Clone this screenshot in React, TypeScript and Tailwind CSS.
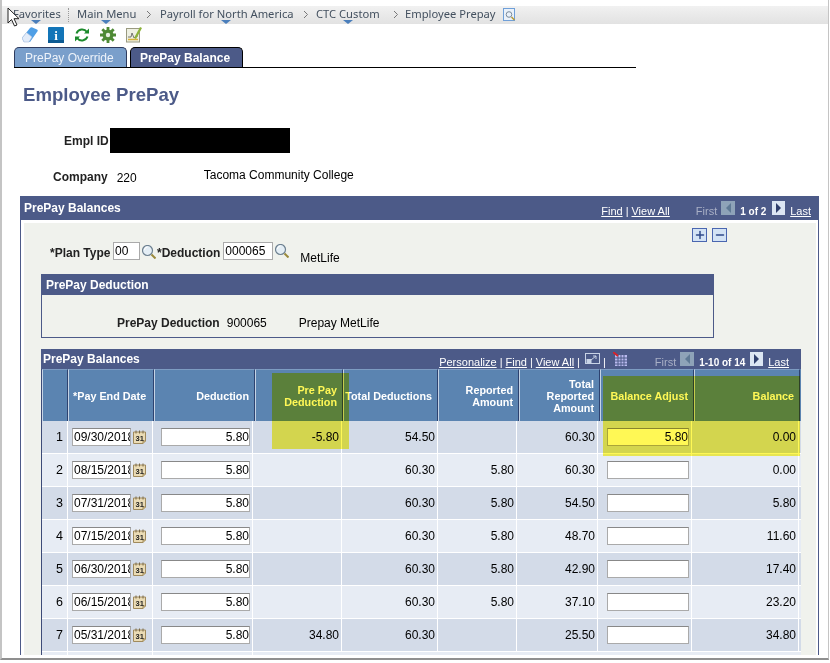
import { Plus, Minus } from "lucide-react";

const rows = [
  { n: 1, date: "09/30/2018", pre: "-5.80", total: "54.50", rep: "", totRep: "60.30", adj: "5.80", bal: "0.00" },
  { n: 2, date: "08/15/2018", pre: "", total: "60.30", rep: "5.80", totRep: "60.30", adj: "", bal: "0.00" },
  { n: 3, date: "07/31/2018", pre: "", total: "60.30", rep: "5.80", totRep: "54.50", adj: "", bal: "5.80" },
  { n: 4, date: "07/15/2018", pre: "", total: "60.30", rep: "5.80", totRep: "48.70", adj: "", bal: "11.60" },
  { n: 5, date: "06/30/2018", pre: "", total: "60.30", rep: "5.80", totRep: "42.90", adj: "", bal: "17.40" },
  { n: 6, date: "06/15/2018", pre: "", total: "60.30", rep: "5.80", totRep: "37.10", adj: "", bal: "23.20" },
  { n: 7, date: "05/31/2018", pre: "34.80", total: "60.30", rep: "", totRep: "25.50", adj: "", bal: "34.80" },
];

const headCell = "flex items-center justify-end text-right whitespace-nowrap pr-[5px] border-l border-t border-l-[#c5d3e5] border-t-[#7d9cc2] border-r border-r-[#2d4270] leading-[12px]";
const rowCell = "flex items-center justify-end pr-[2px] border-r border-white";

const Triangle = ({ left }: { left: number }) => (
  <span className="absolute top-[14px] w-0 h-0 border-x-[5px] border-x-transparent border-t-[4px] border-t-[#4a7ebb]" style={{ left }} />
);

const Chevron = () => (
  <svg width="6" height="9" viewBox="0 0 6 9" className="shrink-0">
    <path d="M1 1l3.500 3.500L1 8" fill="none" stroke="#777" strokeWidth="1" />
  </svg>
);

const Lens = ({ className }: { className?: string }) => (
  <svg width="14" height="14" viewBox="0 0 14 14" className={className}>
    <circle cx="5.500" cy="5.500" r="5" fill="#e4eef5" stroke="#6d8090" strokeWidth="1.200" />
    <path d="M2.500 5a3 3 0 0 1 3-3" fill="none" stroke="#fff" strokeWidth="1" />
    <path d="M9.500 9.500l4 4" stroke="#9a8a3c" strokeWidth="2" />
  </svg>
);

const Calendar = () => (
  <svg width="13" height="14" viewBox="0 0 13 14" className="shrink-0">
    <path d="M.5 2h12v9l-2.500 2.500H.5z" fill="#eadbb4" stroke="#a08a5c" />
    <path d="M10 13.500V11h2.500" fill="#d6c28e" stroke="#a08a5c" />
    <path d="M3 .5v3M6.500 .5v3M10 .5v3" stroke="#7a6a48" />
    <text x="2.500" y="11" fontSize="7.500" fontWeight="700" fontFamily="Liberation Sans, sans-serif" fill="#222">31</text>
  </svg>
);

const Pager = ({ label, labelWidth, className }: { label: string; labelWidth: string; className: string }) => (
  <div className={`flex items-center text-[11px] font-normal text-white ${className}`}>
    <span className="text-[#a9b0c6]">First</span>
    <span className="ml-[4px] mb-[7px] w-[14px] h-[14px] bg-[#8ea3b8] flex items-center justify-center">
      <span className="w-0 h-0 border-y-[5px] border-y-transparent border-r-[5px] border-r-[#5f7a95]" />
    </span>
    <span className={`ml-[5px] text-[10px] font-bold whitespace-nowrap ${labelWidth}`}>{label}</span>
    <span className="ml-[7px] mb-[7px] w-[13px] h-[14px] bg-[#dce6f3] flex items-center justify-center">
      <span className="w-0 h-0 border-y-[5px] border-y-transparent border-l-[5px] border-l-[#2f3f6d]" />
    </span>
    <span className="ml-[5px] underline">Last</span>
  </div>
);

export default function App() {
  return (
    <div className="relative w-[830px] h-[663px] overflow-hidden bg-white font-['Liberation_Sans',Arial,sans-serif] text-[12px] text-black">
      <div className="h-[660px] w-[829px] border-l-2 border-r border-b-2 border-[#c4c4c4] border-b-[#8f8f8f] overflow-hidden">
        {/* breadcrumb bar */}
        <div className="relative mt-[6px] h-[18px] pb-[1px] bg-gradient-to-b from-[#f1f1f1] to-[#e2e2e2] flex items-center font-['Noto_Sans',sans-serif] text-[11.200px] text-[#43505f] pl-[11px] whitespace-nowrap">
          <span className="w-[55px]">Favorites</span>
          <span className="h-[14px] border-l border-dotted border-[#999]" />
          <span className="ml-[8px] w-[61px]">Main Menu</span>
          <span className="ml-[8px]"><Chevron /></span>
          <span className="ml-[8px] w-[134px]">Payroll for North America</span>
          <span className="ml-[9px]"><Chevron /></span>
          <span className="ml-[7px] w-[66px]">CTC Custom</span>
          <span className="ml-[11px]"><Chevron /></span>
          <span className="ml-[6px] w-[91px]">Employee Prepay</span>
          <svg width="13" height="13" viewBox="0 0 13 13" className="ml-[7px]">
            <rect x=".5" y=".5" width="11" height="12" fill="#eaf1fa" stroke="#6f9fd8" />
            <circle cx="6" cy="6.500" r="2.800" fill="none" stroke="#7a8a9a" />
            <path d="M8.500 9l3 3" stroke="#b99a30" strokeWidth="1.500" />
          </svg>
          <Triangle left={29} />
          <Triangle left={99} />
          <Triangle left={219} />
          <Triangle left={341} />
        </div>

        {/* toolbar icons */}
        <div className="h-[21px] pl-[20px] flex items-center gap-[10px]">
          <svg width="16" height="16" viewBox="0 0 16 16">
            <path d="M0 11L8 1c1-1 2-1 3.500 0l3.500 1.500c1 .8 1 1.500 0 2.500L8 15H2z" fill="#4f9fe6" />
            <path d="M0 11l4.500-5.500 5.500 4.500-3 5H2z" fill="#e3ecf9" stroke="#a9bddb" strokeWidth=".6" />
          </svg>
          <svg width="16" height="16" viewBox="0 0 16 16">
            <rect width="16" height="16" rx="1" fill="#1375b8" />
            <rect y="13" width="16" height="3" fill="#0c5a92" />
            <text x="8" y="13" textAnchor="middle" fontSize="13" fontWeight="700" fontFamily="Liberation Serif, serif" fill="#fff">i</text>
          </svg>
          <svg width="16" height="16" viewBox="0 0 16 16">
            <path d="M2.500 6.500A6 6 0 0 1 13 5" fill="none" stroke="#1c8a2c" strokeWidth="2" />
            <path d="M15 1.500v5h-5z" fill="#1c8a2c" />
            <path d="M13.500 9.500A6 6 0 0 1 3 11" fill="none" stroke="#1c8a2c" strokeWidth="2" />
            <path d="M1 14.500v-5h5z" fill="#1c8a2c" />
          </svg>
          <svg width="16" height="16" viewBox="0 0 16 16">
            <circle cx="8" cy="8" r="5.500" fill="#4e8a34" />
            <path d="M8 0v16M0 8h16M2.300 2.300l11.400 11.400M13.700 2.300L2.300 13.700" stroke="#4e8a34" strokeWidth="2.800" />
            <circle cx="8" cy="8" r="2.200" fill="#e6f0df" />
          </svg>
          <svg width="16" height="17" viewBox="0 0 16 17">
            <rect x=".5" y="2.500" width="13" height="13.500" fill="#eef0e2" stroke="#9a9a80" />
            <path d="M2 11h3l1-4 2 5 2-2h2" fill="none" stroke="#555" strokeWidth=".8" />
            <path d="M2 13.500h10" stroke="#d9b23a" strokeWidth="1.500" />
            <path d="M8 12l6-11 2 1-6 11z" fill="#8cb23a" />
          </svg>
        </div>

        {/* tabs */}
        <div className="mt-[2px] ml-[12px] w-[622px] h-[21px] border-b border-black flex items-end gap-[3px]">
          <div className="w-[113px] h-[20px] bg-[#7a9fcb] border border-b-0 border-[#2e3b5e] rounded-t-[5px] text-[#eef3fa] font-medium flex items-center pl-[10px]">PrePay Override</div>
          <div className="w-[113px] h-[20px] bg-[#4c5a88] border border-b-0 border-black rounded-t-[5px] text-white font-bold flex items-center pl-[9px]">PrePay Balance</div>
        </div>

        <h1 className="mt-[15px] ml-[21px] text-[18.600px] leading-[24px] font-bold text-[#4c5a88]">Employee PrePay</h1>

        <div className="mt-[21px] h-[25px] flex items-center">
          <span className="ml-[62px] font-bold text-[#222]">Empl ID</span>
          <span className="ml-[1px] w-[180px] h-[25px] bg-black" />
        </div>
        <div className="mt-[15px] h-[18px] flex items-center">
          <span className="ml-[51px] font-bold text-[#222]">Company</span>
          <span className="ml-[9px] mt-[2px]">220</span>
          <span className="ml-[67px] mb-[5px]">Tacoma Community College</span>
        </div>

        {/* main panel */}
        <div className="mt-[10px] ml-[18px] w-[799px] h-[459px] border-x border-[#4c5a88]">
          <div className="h-[24px] bg-[#4c5a88] flex items-center justify-between pl-[3px] pr-[7px] text-white font-bold">
            <span className="mb-[1px]">PrePay Balances</span>
            <div className="flex items-center mt-[6px] text-[11px] font-normal">
              <span className="underline">Find</span>
              <span className="mx-[3px]">|</span>
              <span className="underline">View All</span>
              <Pager label="1 of 2" labelWidth="w-[25px]" className="ml-[26px]" />
            </div>
          </div>
          <div className="ml-[3px] mr-[2px] mt-[3px] h-[432px] bg-[#f0f2ed]">
            <div className="h-[19px] pt-[5px] pl-[668px] flex gap-[5px]">
              <span className="w-[15px] h-[14px] border border-[#4a66b0] bg-[#d3e3f5] flex items-center justify-center text-[#2f4a8a]"><Plus size={12} strokeWidth={3} /></span>
              <span className="w-[15px] h-[14px] border border-[#4a66b0] bg-[#d3e3f5] flex items-center justify-center text-[#2f4a8a]"><Minus size={12} strokeWidth={3} /></span>
            </div>
            <div className="h-[18px] flex items-start font-bold text-[#222]">
              <span className="ml-[26px] w-[61px] mt-[2px]">*Plan Type</span>
              <input readOnly defaultValue="00" className="ml-[2px] w-[27px] h-[18px] border border-[#aaa] bg-white px-[1px] font-normal text-black outline-none" />
              <Lens className="ml-[2px] mt-[3px]" />
              <span className="ml-[1px] mt-[2px]">*Deduction</span>
              <input readOnly defaultValue="000065" className="ml-[3px] w-[50px] h-[18px] border border-[#aaa] bg-white px-[1px] font-normal text-black outline-none" />
              <Lens className="ml-[2px] mt-[2px]" />
              <span className="ml-[11px] mt-[7px] font-normal text-black">MetLife</span>
            </div>

            <div className="mt-[14px] ml-[17px] w-[673px] h-[64px] border border-[#4c5a88]">
              <div className="h-[20px] bg-[#4c5a88] text-white font-bold flex items-center pl-[4px]">PrePay Deduction</div>
              <div className="mt-[19px] flex items-center">
                <span className="ml-[75px] font-bold text-[#222]">PrePay Deduction</span>
                <span className="ml-[7px]">900065</span>
                <span className="ml-[32px]">Prepay MetLife</span>
              </div>
            </div>

            {/* balances grid */}
            <div className="mt-[11px] ml-[17px] w-[760px]">
              <div className="h-[20px] bg-[#4c5a88] flex items-center justify-between pl-[2px] pr-[12px] text-white font-bold">
                <span>PrePay Balances</span>
                <div className="flex items-center mt-[6px] text-[11px] font-normal">
                  <span className="underline">Personalize</span>
                  <span className="mx-[3px]">|</span>
                  <span className="underline">Find</span>
                  <span className="mx-[3px]">|</span>
                  <span className="underline">View All</span>
                  <span className="mx-[3px]">|</span>
                  <svg width="15" height="13" viewBox="0 0 15 13" className="mb-[6px] ml-[2px]">
                    <rect x=".5" y=".5" width="14" height="10" fill="none" stroke="#c9d3e6" />
                    <rect x="1.500" y="6" width="5" height="4" fill="#c9d3e6" />
                    <path d="M6 7l5-4M8 3h3v3" fill="none" stroke="#c9d3e6" />
                  </svg>
                  <span className="mx-[3px]">|</span>
                  <svg width="14" height="14" viewBox="0 0 14 14" className="ml-[4px] mb-[6px]">
                    <rect x="2" y="3" width="12" height="11" fill="#b9b9ef" />
                    <path d="M2 6h12M2 9h12M2 12h12M5 3v11M8 3v11M11 3v11" stroke="#4c5a88" />
                    <path d="M0 0l5 4" stroke="#d8222a" strokeWidth="2" />
                  </svg>
                  <Pager label="1-10 of 14" labelWidth="w-[44px]" className="ml-[28px]" />
                </div>
              </div>

              <div className="border-l border-[#3d4b78]">
                <div className="h-[52px] grid grid-cols-[26px_86px_101px_88px_95px_81px_81px_94px_106px] bg-[#5b84b1] text-white font-bold text-[10.800px]">
                  <div className={headCell} />
                  <div className={`${headCell} !justify-start pl-[4px]`}>*Pay End Date</div>
                  <div className={headCell}>Deduction</div>
                  <div className={headCell}>Pre Pay<br />Deduction</div>
                  <div className={headCell}>Total Deductions</div>
                  <div className={headCell}>Reported<br />Amount</div>
                  <div className={headCell}>Total<br />Reported<br />Amount</div>
                  <div className={headCell}>Balance Adjust</div>
                  <div className={headCell}>Balance</div>
                </div>

                {rows.map((r) => (
                  <div
                    key={r.n}
                    className={`h-[33px] border-b border-white grid grid-cols-[26px_85px_100px_89px_96px_79px_81px_94px_107px] ${r.n % 2 === 1 ? "bg-[#d3dbe8]" : "bg-[#e7ecf4]"}`}
                  >
                    <div className={`${rowCell} !pr-[4px] text-[12.500px]`}>{r.n}</div>
                    <div className="flex items-center gap-[2px] pl-[4px] border-r border-white">
                      <input readOnly defaultValue={r.date} className="w-[59px] h-[18px] border border-[#aaa] border-t-[#888] bg-white pl-[1px] pr-0 text-black outline-none" />
                      <Calendar />
                    </div>
                    <div className="flex items-center pl-[8px] border-r border-white">
                      <input readOnly defaultValue="5.80" className="w-[89px] h-[18px] border border-[#aaa] border-t-[#888] bg-white text-right pr-0 text-black outline-none" />
                    </div>
                    <div className={rowCell}>{r.pre}</div>
                    <div className={rowCell}>{r.total}</div>
                    <div className={rowCell}>{r.rep}</div>
                    <div className={rowCell}>{r.totRep}</div>
                    <div className="flex items-center pl-[9px] border-r border-white">
                      <input readOnly defaultValue={r.adj} className="w-[82px] h-[18px] border border-[#aaa] border-t-[#888] bg-white text-right pr-0 text-black outline-none" />
                    </div>
                    <div className={rowCell}>{r.bal}</div>
                  </div>
                ))}
                <div className="h-[3px] bg-[#e7ecf4] grid grid-cols-[26px_85px_100px_89px_96px_79px_81px_94px_107px]">
                  <div className="border-r border-white" />
                  <div className="border-r border-white" />
                  <div className="border-r border-white" />
                </div>
              </div>
            </div>
          </div>
        </div>
      </div>

      {/* screenshot annotations */}
      <div className="absolute left-[272px] top-[373px] w-[77px] h-[76px] bg-[#fff855] mix-blend-multiply" />
      <div className="absolute left-[603px] top-[376px] w-[197px] h-[80px] bg-[#fff855] mix-blend-multiply" />
      <svg width="13" height="20" viewBox="0 0 13 20" className="absolute left-[7px] top-[7px]">
        <path d="M1 1v15l3.500-3.500 3 6.500 2.500-1-3-6.300h5z" fill="#fff" stroke="#222" strokeWidth="1" />
      </svg>
    </div>
  );
}
